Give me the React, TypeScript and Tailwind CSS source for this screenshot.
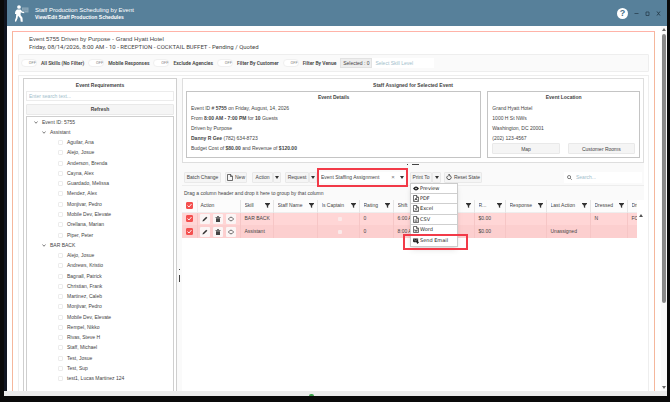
import { useState } from 'react';
import type { ReactNode } from 'react';

const filters = ['All Skills (No Filter)', 'Mobile Responses', 'Exclude Agencies', 'Filter By Customer', 'Filter By Venue'];

const groups = [
  {
    name: 'Assistant',
    staff: [
      'Aguilar, Ana',
      'Alejo, Josue',
      'Anderson, Brenda',
      'Cayna, Alex',
      'Guardado, Melissa',
      'Mendez, Alex',
      'Monjivar, Pedro',
      'Mobile Dev, Elevate',
      'Orellana, Marian',
      'Piper, Peter',
    ],
  },
  {
    name: 'BAR BACK',
    staff: [
      'Alejo, Josue',
      'Andrews, Kristio',
      'Bagnall, Patrick',
      'Christian, Frank',
      'Martinez, Caleb',
      'Monjivar, Pedro',
      'Mobile Dev, Elevate',
      'Rempel, Nikko',
      'Rivas, Steve H',
      'Staff, Michael',
      'Test, Josue',
      'Test, Sup',
      'test1, Lucas Martinez 124',
    ],
  },
];

const columns = [
  { label: 'Skill', width: 'w-[33px]', filter: true },
  { label: 'Staff Name', width: 'w-[44px]', filter: true },
  { label: 'Is Captain', width: 'w-[42px]', filter: true },
  { label: 'Rating', width: 'w-[34px]', filter: true },
  { label: 'Shift', width: 'w-[40px]', filter: true },
  { label: '', width: 'w-[41px]', filter: true },
  { label: 'R...', width: 'w-[31px]', filter: true },
  { label: 'Response', width: 'w-[41px]', filter: true },
  { label: 'Last Action', width: 'w-[44px]', filter: true },
  { label: 'Dressed', width: 'w-[37px]', filter: true },
  { label: 'Dri', width: '', filter: false },
];

const rows = [
  ['BAR BACK', '', 'captain', '0', '6:00 AM', '', '$0.00', '', '', 'N', 'FO'],
  ['Assistant', '', 'captain', '0', '8:00 AM', '', '$0.00', '', 'Unassigned', '', ''],
];

const buttonClass = 'flex h-[11px] shrink-0 items-center justify-center gap-[2px] rounded-[1px] border border-[#e9e9e9] bg-[#f5f5f5] whitespace-nowrap';

function Caret() {
  return (
    <svg viewBox="0 0 8 6" className="h-[3px] w-[4px] shrink-0" aria-hidden="true">
      <path d="M0 0h8L4 6z" fill="#333" />
    </svg>
  );
}

function Chevron() {
  return (
    <svg viewBox="0 0 8 6" className="h-[3px] w-[4px] shrink-0" fill="none" stroke="#555" strokeWidth="1.5" aria-hidden="true">
      <path d="M1 1l3 3.5L7 1" />
    </svg>
  );
}

function FilterIcon() {
  return (
    <svg viewBox="0 0 10 10" className="h-[5px] w-[5px] shrink-0" fill="#333" aria-hidden="true">
      <path d="M0 0h10v1.5L6.3 5.5V10L3.7 8.5v-3L0 1.5z" />
    </svg>
  );
}

function PersonIcon() {
  return (
    <svg viewBox="0 0 28 34" className="h-[17px] w-[14px]" fill="#fff" aria-hidden="true">
      <circle cx="8" cy="4" r="3.7" />
      <path d="M4 9h7l3.5 4 4 .5v2.800l-5.500-.8-1.200-1.300-.8 6 4 5.500.5 8h-4l-1-7-4.500-5L5 27l-3 6.500-3-1L1.800 25.500 2.500 18H-.500l1.500-6z" />
      <path d="M14 5h13v10h-8v-3l-5-1z" fill="#8ba7b8" />
      <path d="M16 8h9M16 11h9" stroke="#6b8fa5" fill="none" />
    </svg>
  );
}

function FileIcon({ children }: { children?: ReactNode }) {
  return (
    <svg viewBox="0 0 12 14" className="h-[7px] w-[6px] shrink-0" fill="none" stroke="#333" strokeWidth="1.4" aria-hidden="true">
      <path d="M1 1h6.500l3.500 3.500V13H1z M7 1v4h4" />
      {children}
    </svg>
  );
}

const exportItems = [
  {
    label: 'Preview',
    icon: (
      <svg viewBox="0 0 12 10" className="h-[5px] w-[6px]" aria-hidden="true">
        <path d="M0 5Q6-3 12 5Q6 13 0 5z" fill="#222" />
        <circle cx="6" cy="5" r="1.500" fill="#fff" />
      </svg>
    ),
  },
  { label: 'PDF', icon: <FileIcon><path d="M3 11l3-5 3 5M4 9h4" /></FileIcon> },
  { label: 'Excel', icon: <FileIcon><path d="M3.500 6l5 5.500M8.500 6l-5 5.500" /></FileIcon> },
  { label: 'CSV', icon: <FileIcon><path d="M3 8h6M3 10.500h6" /></FileIcon> },
  { label: 'Word', icon: <FileIcon><path d="M3 7l1.500 4L6 7.500 7.500 11 9 7" /></FileIcon> },
  {
    label: 'Send Email',
    icon: (
      <svg viewBox="0 0 14 14" className="h-[6px] w-[6px]" aria-hidden="true">
        <path d="M0 1h12v7l2 2.500-4 3.500-2-4H2L0 8z" fill="#222" />
        <path d="M1 2.500l5 4 5-4" stroke="#fff" strokeWidth="1" fill="none" />
      </svg>
    ),
  },
];

const rowActions = [
  {
    label: 'Edit',
    icon: <path d="M1 11l.800-3L8.500 1.300 10.700 3.500 4 10.200z" fill="#333" />,
  },
  {
    label: 'Delete',
    icon: <path d="M1 2h3V.500h4V2h3v1.500H1zM2 4.500h8V12H2z" fill="#444" />,
  },
  {
    label: 'View',
    icon: <path d="M.800 6Q6-1.500 11.200 6Q6 13.500 .800 6z" fill="none" stroke="#333" strokeWidth="1.400" />,
  },
];

function RedCheckbox({ label }: { label: string }) {
  return (
    <span className="mx-auto grid h-[7px] w-[7px] place-items-center">
      <input
        type="checkbox"
        defaultChecked
        aria-label={label}
        className="col-start-1 row-start-1 h-[7px] w-[7px] appearance-none rounded-[1px] border border-[#f4504f] checked:bg-[#f4504f]"
      />
      <svg viewBox="0 0 10 10" className="pointer-events-none col-start-1 row-start-1 h-[5px] w-[5px]" fill="none" stroke="#fff" strokeWidth="1.800" aria-hidden="true">
        <path d="M1 5l3 3 5-6" />
      </svg>
    </span>
  );
}

function TitleBar() {
  return (
    <header className="flex h-[26px] shrink-0 items-center bg-[#57809a] pr-[6px] pl-[8px] text-white">
      <PersonIcon />
      <div className="ml-[6px] flex-1">
        <h1 className="text-[6px] leading-[8px]">Staff Production Scheduling by Event</h1>
        <p className="text-[5px] leading-[6px] font-bold">View/Edit Staff Production Schedules</p>
      </div>
      <button aria-label="Help" className="grid h-[11px] w-[11px] place-items-center rounded-full bg-white text-[9px] leading-none font-bold text-[#476f89]">?</button>
      <div className="ml-[6px] flex items-center gap-[6px]">
        <button aria-label="Minimize">
          <svg viewBox="0 0 10 10" className="h-[5px] w-[5px]" stroke="#263c4b" strokeWidth="1.500"><path d="M1 5h8" /></svg>
        </button>
        <button aria-label="Maximize">
          <svg viewBox="0 0 10 10" className="h-[5px] w-[5px]" fill="none" stroke="#263c4b" strokeWidth="1.500"><path d="M2 2h6v7H2z" /></svg>
        </button>
        <button aria-label="Close">
          <svg viewBox="0 0 10 10" className="h-[5px] w-[5px]" stroke="#263c4b" strokeWidth="1.800"><path d="M2 1l6 8M8 1L2 9" /></svg>
        </button>
      </div>
    </header>
  );
}

function FilterBar() {
  return (
    <div className="mt-[4px] flex h-[18px] shrink-0 items-center rounded-[1px] border border-[#eeeeee] bg-[#fafafa] pl-[2px]">
      {filters.map((filter) => (
        <label key={filter} className="mr-[4px] flex items-center gap-[4px] font-['Roboto',sans-serif] font-semibold whitespace-nowrap">
          <span className="grid items-center">
            <input type="checkbox" role="switch" className="col-start-1 row-start-1 h-[8px] w-[16px] appearance-none rounded-full border border-[#f0f0f0] bg-white" />
            <span className="col-start-1 row-start-1 pr-[1px] text-right text-[4px] leading-[8px] font-normal text-[#888]">OFF</span>
          </span>
          {filter}
        </label>
      ))}
      <button className="h-[10px] w-[32px] border border-[#e2e2e2] bg-[#eeeeee] whitespace-nowrap">Selected : 0</button>
      <input aria-label="Select Skill Level" placeholder="Select Skill Level" className="h-[10px] w-[62px] bg-white px-[3px] placeholder:text-[#9fbecb]" />
    </div>
  );
}

function StaffTree() {
  return (
    <div className="mt-px flex min-h-0 flex-1 flex-col border border-b-0 border-[#cfcfcf] pb-[7px]">
      <button className="flex flex-1 items-center gap-[4px] pl-[7px]">
        <Chevron /> Event ID: 5755
      </button>
      {groups.map((group) => (
        <div key={group.name} className="contents">
          <button className="flex flex-1 items-center gap-[4px] pl-[15px]">
            <Chevron /> {group.name}
          </button>
          {group.staff.map((person) => (
            <label key={person} className="flex flex-1 items-center gap-[4px] pl-[31px]">
              <input type="checkbox" className="h-[5px] w-[5px] appearance-none rounded-[1px] border border-[#ececec] bg-white checked:bg-[#f4504f]" />
              {person}
            </label>
          ))}
        </div>
      ))}
    </div>
  );
}

function EventCards() {
  return (
    <section className="border border-[#dedede] px-[3px] pb-[4px]">
      <h2 className="text-center leading-[12px] font-bold">Staff Assigned for Selected Event</h2>
      <div className="flex gap-[6px]">
        <div className="h-[67px] flex-2 border border-[#c4c4c4] px-[4px] leading-[10px]">
          <h3 className="mb-px text-center font-bold">Event Details</h3>
          <p>Event ID # <b>5755</b> on Friday, August, 14, 2026</p>
          <p>From <b>8:00 AM - 7:00 PM</b> for <b>10</b> Guests</p>
          <p>Driven by Purpose</p>
          <p><b>Danny R Gee</b> (782) 634-8723</p>
          <p>Budget Cost of <b>$80.00</b> and Revenue of <b>$120.00</b></p>
        </div>
        <div className="h-[67px] flex-1 border border-[#c4c4c4] px-[4px] leading-[10px]">
          <h3 className="mb-px text-center font-bold">Event Location</h3>
          <p>Grand Hyatt Hotel</p>
          <p>1000 H St NWs</p>
          <p>Washington, DC 20001</p>
          <p>(202) 123-4567</p>
          <div className="flex gap-[8px]">
            <button className={`${buttonClass} flex-1`}>Map</button>
            <button className={`${buttonClass} flex-1`}>Customer Rooms</button>
          </div>
        </div>
      </div>
    </section>
  );
}

function Toolbar() {
  return (
    <div className="flex h-[17px] items-center border-b border-[#ededed] bg-[#fafafa] pr-[2px] pl-[2px]">
      <button className={`${buttonClass} w-[37px]`}>Batch Change</button>
      <button className={`${buttonClass} ml-[4px] w-[22px]`}>
        <FileIcon /> New
      </button>
      <button className={`${buttonClass} ml-[5px] w-[21px]`}>Action</button>
      <button aria-label="Action options" className={`${buttonClass} w-[8px]`}><Caret /></button>
      <button className={`${buttonClass} ml-[4px] w-[24px]`}>Request</button>
      <button aria-label="Request options" className={`${buttonClass} w-[8px]`}><Caret /></button>
      <div className="relative flex h-[11px] w-[91px] shrink-0 items-center bg-white">
        <select aria-label="Report" className="h-[11px] w-[72px] appearance-none pl-[4px]">
          <option>Event Staffing Assignment</option>
        </select>
        <button aria-label="Clear" className="w-[8px] text-[6px] leading-none text-[#777]">×</button>
        <button aria-label="Open report list" className="flex w-[10px] justify-center"><Caret /></button>
        <div className="pointer-events-none absolute inset-x-0 -inset-y-[4px] z-20 border-2 border-[#f23a48]" />
      </div>
      <div className="relative ml-[2px] flex shrink-0">
        <button className={`${buttonClass} w-[22px]`}>Print To</button>
        <button aria-label="Print options" className={`${buttonClass} w-[9px]`}><Caret /></button>
        <ExportMenu />
      </div>
      <button className={`${buttonClass} ml-[3px] w-[38px]`}>
        <svg viewBox="0 0 12 12" className="h-[6px] w-[6px] shrink-0" fill="none" stroke="#333" strokeWidth="1.600" aria-hidden="true">
          <path d="M3.500 3.500a4.300 4.300 0 1 0 5 0M6 0v4.500M5.500 .800L9 3.300" />
        </svg>
        Reset State
      </button>
      <label className="ml-auto flex h-[11px] w-[78px] items-center gap-[4px] bg-white pl-[3px]">
        <svg viewBox="0 0 12 12" className="h-[5px] w-[5px] shrink-0" fill="none" stroke="#444" strokeWidth="1.600" aria-hidden="true">
          <circle cx="5" cy="5" r="3.800" />
          <path d="M8 8l3.500 3.500" />
        </svg>
        <input type="search" aria-label="Search" placeholder="Search..." className="w-full min-w-0 placeholder:text-[#9fbecb]" />
      </label>
    </div>
  );
}

function ExportMenu() {
  return (
    <div className="absolute top-full left-0 z-10 w-[48px] border border-[#cccccc] bg-white font-['DejaVu_Sans',sans-serif] text-[#222] shadow-md">
      {exportItems.map((item) => (
        <button
          key={item.label}
          className="flex h-[10px] w-full items-center gap-px border-b border-[#cfcfcf] pl-px leading-none whitespace-nowrap nth-[3]:h-[11px] nth-[5]:h-[11px] nth-[6]:border-b-0"
        >
          <span className="flex w-[7px] shrink-0 justify-center">{item.icon}</span>
          {item.label}
        </button>
      ))}
      <div className="pointer-events-none absolute -right-[11px] -bottom-[4px] -left-[8px] h-[16px] border-2 border-[#f23a48]" />
    </div>
  );
}

function StaffGrid() {
  return (
    <div className="flex">
      <table className="w-full min-w-0 flex-1 table-fixed border-collapse text-left">
        <thead>
          <tr className="h-[12px] border-b border-[#eeeeee] bg-[#fcfcfc]">
            <th className="w-[15px]"><RedCheckbox label="Select all rows" /></th>
            <th className="w-[43px] border-l border-[#eeeeee] pl-[3px] font-normal">Action</th>
            {columns.map((column, i) => (
              <th key={i} className={`${column.width} border-l border-[#e6e6e6] pl-[4px] font-normal`}>
                <span className="flex items-center justify-between overflow-hidden pr-[3px] whitespace-nowrap">
                  <span>{column.label}</span>
                  {column.filter && <FilterIcon />}
                </span>
              </th>
            ))}
          </tr>
        </thead>
        <tbody>
          {rows.map((row) => (
            <tr key={row[0]} className="h-[13px] bg-[#ffd6d6] even:bg-[#fccfcf]">
              <td><RedCheckbox label={`Select ${row[0]}`} /></td>
              <td className="border-l border-[#f6c6c6] pl-[2px]">
                <span className="flex gap-[3px]">
                  {rowActions.map((action) => (
                    <button key={action.label} aria-label={action.label} className="grid h-[10px] w-[10px] place-items-center rounded-[1px] bg-[#fbf5f5]">
                      <svg viewBox="0 0 12 12" className="h-[6px] w-[6px]">{action.icon}</svg>
                    </button>
                  ))}
                </span>
              </td>
              {row.map((cell, i) => (
                <td key={i} className="overflow-hidden border-l border-[#f6c6c6] pl-[4px] whitespace-nowrap">
                  {cell === 'captain' ? (
                    <input type="checkbox" aria-label={`${row[0]} is captain`} className="mx-auto block h-[4px] w-[4px] appearance-none rounded-[1px] bg-[#fbeaea] checked:bg-[#f4504f]" />
                  ) : (
                    cell
                  )}
                </td>
              ))}
            </tr>
          ))}
        </tbody>
      </table>
      <div className="w-[7px] pt-[14px]">
        <svg viewBox="0 0 8 6" className="mx-auto h-[3px] w-[4px]" fill="#555" aria-hidden="true"><path d="M4 0l4 6H0z" /></svg>
      </div>
    </div>
  );
}

export default function App() {
  const [search, setSearch] = useState('');

  return (
    <div className="flex h-screen flex-col overflow-hidden bg-[#0a0a0a] pr-[3px] pb-[6px] pl-[4px] font-['Liberation_Sans',Arial,sans-serif] text-[5px] leading-[7px] text-[#444]">
      <div className="flex min-h-0 flex-1 flex-col border-l-[3px] border-[#101521] bg-white">
        <TitleBar />
        <div className="flex min-h-0 flex-1 pt-[5px] pl-[5px]">
          <main className="flex min-w-0 flex-1 flex-col border border-b-0 border-[#f5b79c] border-t-[#ffb3a8] px-[5px] pt-[4px]">
            <div className="pl-[11px] text-[6px] text-[#444]">
              <h2>Event 5755 Driven by Purpose - Grand Hyatt Hotel</h2>
              <p className="font-['Roboto',sans-serif]">Friday, 08/14/2026, 8:00 AM - 10 - RECEPTION - COCKTAIL BUFFET - Pending / Quoted</p>
            </div>
            <FilterBar />
            <div className="mt-[3px] flex min-h-0 flex-1 border border-b-0 border-[#eeeeee] pt-[2px] pr-[4px] pl-[4px]">
              <aside className="flex w-[154px] shrink-0 flex-col border border-b-0 border-[#cfcfcf] px-[2px]">
                <h2 className="text-center leading-[12px] font-bold">Event Requirements</h2>
                <input
                  aria-label="Enter search text"
                  placeholder="Enter search text..."
                  value={search}
                  onChange={(e) => setSearch(e.target.value)}
                  className="h-[10px] shrink-0 border border-[#ececec] px-[2px] placeholder:text-[#9fbecb]"
                />
                <button className={`${buttonClass} mt-[3px] font-bold`}>Refresh</button>
                <StaffTree />
              </aside>
              <div className="flex w-[5px] shrink-0 flex-col items-center justify-center gap-[5px] bg-[#fafafa] pt-[82px]">
                <span className="h-px w-px bg-[#444]" />
                <span className="h-[7px] w-px bg-[#444]" />
              </div>
              <div className="min-w-0 flex-1">
                <EventCards />
                <div className="flex h-[6px] items-start justify-center gap-[4px] bg-[#fafafa] pt-px">
                  <span className="h-px w-px bg-[#444]" />
                  <span className="h-px w-[7px] bg-[#444]" />
                </div>
                <Toolbar />
                <p className="bg-[#fafafa] pl-[2px] leading-[14px]">Drag a column header and drop it here to group by that column</p>
                <StaffGrid />
              </div>
            </div>
          </main>
          <div className="-mt-[5px] ml-[6px] flex w-[6px] flex-col items-center bg-[#fafafa] pt-[2px] pb-[2px]">
            <svg viewBox="0 0 8 6" className="h-[3px] w-[4px]" fill="#666" aria-hidden="true"><path d="M4 0l4 6H0z" /></svg>
            <div className="my-[3px] w-[4px] flex-[270] rounded-full bg-[#888888]" />
            <div className="flex-[80]" />
            <svg viewBox="0 0 8 6" className="h-[3px] w-[4px]" fill="#666" aria-hidden="true"><path d="M0 0h8L4 6z" /></svg>
          </div>
        </div>
      </div>
      <div className="flex h-[5px] shrink-0 items-end bg-[#ececec] pl-[46%]">
        <span className="h-[2px] w-[5px] rounded-t-full bg-[#3fa34d]" />
      </div>
    </div>
  );
}
